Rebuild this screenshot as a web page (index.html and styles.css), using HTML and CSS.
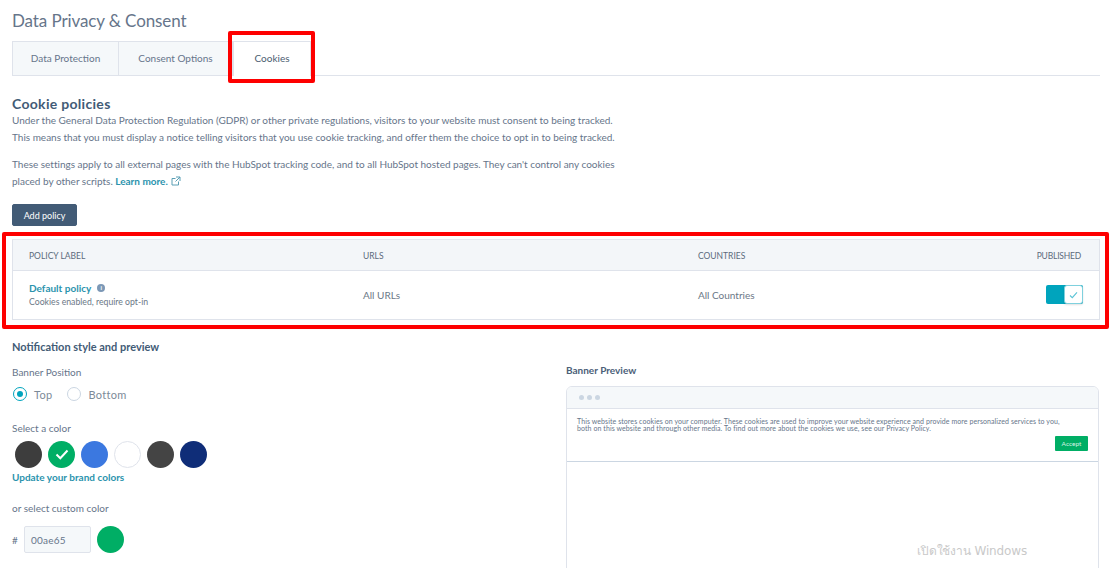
FILE: index.html
```html
<!DOCTYPE html>
<html lang="en">
<head>
<meta charset="utf-8">
<title>Data Privacy &amp; Consent</title>
<link rel="stylesheet" href="styles.css">
</head>
<body>
<div class="page">
  <h1 class="title">Data Privacy &amp; Consent</h1>
  <div class="tabs">
    <div class="tab">Data Protection</div>
    <div class="tab tab-two">Consent Options</div>
    <div class="tab tab-active">Cookies</div>
  </div>
  <h2 class="heading">Cookie policies</h2>
  <p class="copy">Under the General Data Protection Regulation (GDPR) or other private regulations, visitors to your website must consent to being tracked.<br>This means that you must display a notice telling visitors that you use cookie tracking, and offer them the choice to opt in to being tracked.</p>
  <p class="copy copy-second">These settings apply to all external pages with the HubSpot tracking code, and to all HubSpot hosted pages. They can't control any cookies<br>placed by other scripts. <a class="learn">Learn more.</a>
    <svg class="ext" width="10" height="10" viewBox="0 0 10 10"><path d="M7.500 5.500V9H1V2.500h3.500M5 1h4v4M9 1 4.500 5.500" fill="none" stroke="#5a9fb5" stroke-width="1"/></svg></p>
  <button class="add">Add policy</button>
  <div class="table">
    <div class="row row-head">
      <div class="cell c1">POLICY LABEL</div>
      <div class="cell c2">URLS</div>
      <div class="cell c3">COUNTRIES</div>
      <div class="cell c4">PUBLISHED</div>
    </div>
    <div class="row row-body">
      <div class="cell c1">
        <div class="policy">Default policy <span class="info">i</span></div>
        <div class="policy-sub">Cookies enabled, require opt-in</div>
      </div>
      <div class="cell c2">All URLs</div>
      <div class="cell c3">All Countries</div>
      <div class="cell c4">
        <span class="toggle"><span class="knob"><svg width="9" height="8" viewBox="0 0 9 8"><path d="M1 4.500 3.300 6.700 8 1.300" fill="none" stroke="#5cc4d6" stroke-width="1.100"/></svg></span></span>
      </div>
    </div>
  </div>
  <div class="columns">
    <div class="left">
      <h3 class="sub">Notification style and preview</h3>
      <div class="label">Banner Position</div>
      <div class="radios">
        <span class="radio radio-on"></span><span class="radio-text">Top</span>
        <span class="radio radio-off"></span><span class="radio-text">Bottom</span>
      </div>
      <div class="label label-color">Select a color</div>
      <div class="swatches">
        <span class="swatch s1"></span>
        <span class="swatch s2"><svg width="14" height="11" viewBox="0 0 14 11"><path d="M1.500 5.500 5.300 9.200 12.500 1.500" fill="none" stroke="#fff" stroke-width="2"/></svg></span>
        <span class="swatch s3"></span>
        <span class="swatch s4"></span>
        <span class="swatch s5"></span>
        <span class="swatch s6"></span>
      </div>
      <a class="brand">Update your brand colors</a>
      <div class="label label-custom">or select custom color</div>
      <div class="custom">
        <span class="hash">#</span>
        <span class="hex">00ae65</span>
        <span class="swatch s2 custom-dot"></span>
      </div>
    </div>
    <div class="right">
      <div class="preview-label">Banner Preview</div>
      <div class="browser">
        <div class="browser-bar"><i></i><i></i><i></i></div>
        <div class="banner">
          <p class="banner-text">This website stores cookies on your computer. These cookies are used to improve your website experience and provide more personalized services to you,<br>both on this website and through other media. To find out more about the cookies we use, see our Privacy Policy.</p>
          <div class="banner-actions"><span class="accept">Accept</span></div>
        </div>
      </div>
    </div>
  </div>
  <div class="mark mark-tab"></div>
  <div class="mark mark-table"></div>
  <div class="watermark">เปิดใช้งาน Windows</div>
</div>
</body>
</html>
```
FILE: styles.css
```css
* { box-sizing: border-box; }
html, body { margin: 0; height: 100%; overflow: hidden; background: #fff; }
body { font-family: Lato, "Open Sans", sans-serif; color: #33475b; }
.page { position: relative; width: 1116px; height: 568px; overflow: hidden; padding: 11px 16px 0 12px; }
.title { margin: 0; font-size: 17px; line-height: 19px; font-weight: 400; color: #66758a; letter-spacing: -.1px; }
.tabs { display: flex; height: 35px; margin-top: 11px; border-bottom: 1px solid #dfe3eb; }
.tab { height: 34px; background: #f5f8fa; border: 1px solid #dfe3eb; border-bottom: 0; font-size: 10px; line-height: 33px; text-align: center; color: #66758a; width: 107px; }
.tab-two { width: 114px; border-left: 0; }
.tab-active { width: 78px; background: #fff; height: 35px; border-left: 1px solid #dfe3eb; color: #4a5d70; }
.heading { margin: 19px 0 0; font-size: 14px; line-height: 17px; font-weight: 700; color: #425b76; letter-spacing: .3px; }
.copy { margin: 0; font-size: 10px; line-height: 17px; color: #66758a; letter-spacing: -.01px; }
.copy-second { margin-top: 10px; }
.learn { color: #2b93ad; font-weight: 700; }
.ext { vertical-align: -1px; margin-left: 1px; }
.add { display: block; width: 65px; height: 22px; margin-top: 14px; padding: 0; border: 1px solid #425b76; border-radius: 2px; background: #425b76; color: #fff; font: 400 9px Lato, sans-serif; }
.table { margin-top: 13px; width: 1088px; border: 1px solid #dfe3eb; border-top: 1px solid #e5e9ef; }
.row { display: flex; align-items: center; padding: 0 16px; }
.row-head { height: 31px; padding-top: 2px; background: #f3f6f9; border-bottom: 1px solid #dfe3eb; font-size: 8.500px; color: #5b6b7c; }
.row-head .c4 { padding-right: 2px; letter-spacing: -.2px; }
.row-body { height: 48px; font-size: 10px; color: #6b7886; }
.c1 { width: 334px; }
.row-body .c1 { margin-top: -2px; }
.c2 { width: 335px; }
.c3 { width: 300px; }
.c4 { flex: 1; display: flex; justify-content: flex-end; }
.policy { font-size: 10px; font-weight: 700; color: #2b93ad; display: flex; align-items: center; gap: 6px; line-height: 13px; }
.info { width: 8px; height: 8px; margin-top: -1px; border-radius: 50%; background: #7c98b6; color: #fff; font-size: 6px; font-weight: 700; line-height: 8px; text-align: center; }
.policy-sub { font-size: 8.700px; line-height: 11px; margin-top: 1px; color: #6b7886; }
.toggle { display: block; width: 37px; height: 19px; margin-top: -1px; background: #00a4bd; border-radius: 2px; position: relative; }
.knob { position: absolute; right: 0; top: 0; width: 19px; height: 19px; background: #fff; border: 1px solid #7fd1de; border-radius: 3px; display: flex; align-items: center; justify-content: center; box-shadow: 0 1px 2px rgba(0,0,0,.12); }
.columns { display: flex; }
.left { width: 554px; }
.sub { margin: 20px 0 0; font-size: 11px; line-height: 13px; font-weight: 700; color: #425b76; }
.label { font-size: 10px; line-height: 12px; color: #66758a; margin-top: 13px; }
.radios { display: flex; align-items: center; margin-top: 9px; height: 14px; font-size: 11px; color: #7c8a98; letter-spacing: .3px; }
.radio { width: 14px; height: 14px; border-radius: 50%; background: #fff; }
.radio-on { margin-left: 1px; border: 1px solid #00a4bd; position: relative; }
.radio-on::after { content: ""; position: absolute; left: 3px; top: 3px; width: 6px; height: 6px; border-radius: 50%; background: #00a4bd; }
.radio-off { border: 1px solid #cbd6e2; margin-left: 15px; }
.radio-text { margin-left: 7px; }
.label-color { margin-top: 21px; }
.swatches { display: flex; gap: 6px; margin-top: 7px; padding-left: 3px; }
.swatch { display: flex; align-items: center; justify-content: center; width: 27px; height: 27px; border-radius: 50%; }
.s1 { background: #3d3d3d; }
.s2 { background: #00ae65; }
.s3 { background: #3b78e0; }
.s4 { background: #fff; border: 1px solid #dfe3eb; }
.s5 { background: #444; }
.s6 { background: #0f2d78; }
.brand { display: block; margin-top: 3px; font-size: 10px; line-height: 12px; font-weight: 700; color: #2b93ad; }
.label-custom { margin-top: 19px; }
.custom { display: flex; align-items: center; margin-top: 12px; font-size: 10px; color: #66758a; }
.hash { width: 12px; }
.hex { width: 67px; height: 27px; padding-left: 6px; line-height: 26px; background: #f5f8fa; border: 1px solid #dfe3eb; border-radius: 2px; letter-spacing: .2px; }
.custom-dot { margin-left: 6px; }
.right { width: 533px; }
.preview-label { margin-top: 44px; font-size: 10px; line-height: 12px; font-weight: 700; color: #4b6078; }
.browser { margin-top: 10px; height: 200px; border: 1px solid #dfe3eb; border-radius: 6px 6px 0 0; }
.browser-bar { display: flex; align-items: center; gap: 3px; height: 22px; padding-left: 12px; background: #f5f8fa; border-bottom: 1px solid #dfe3eb; border-radius: 5px 5px 0 0; }
.browser-bar i { width: 5px; height: 5px; border-radius: 50%; background: #cbd6e2; }
.banner { height: 53px; padding: 9px 10px 0; border-bottom: 1px solid #cbd6e2; }
.banner-text { margin: 0; font-size: 7px; line-height: 7px; color: #66758a; white-space: nowrap; letter-spacing: .08px; }
.banner-actions { display: flex; justify-content: flex-end; margin-top: 4px; }
.accept { width: 33px; height: 15px; background: #00ae65; color: #d5f3e4; font-size: 6.500px; line-height: 15px; text-align: center; border-radius: 1px; }
.mark { position: absolute; border: 4px solid #fe0000; border-radius: 2px; pointer-events: none; }
.mark-tab { left: 228px; top: 31px; width: 87px; height: 52px; }
.mark-table { left: 2px; top: 232px; width: 1107px; height: 97px; }
.watermark { position: absolute; left: 917px; top: 543px; font-family: "DejaVu Sans", "Noto Sans", sans-serif; font-size: 12px; line-height: 16px; color: #c9c9c9; letter-spacing: -.15px; }
```
